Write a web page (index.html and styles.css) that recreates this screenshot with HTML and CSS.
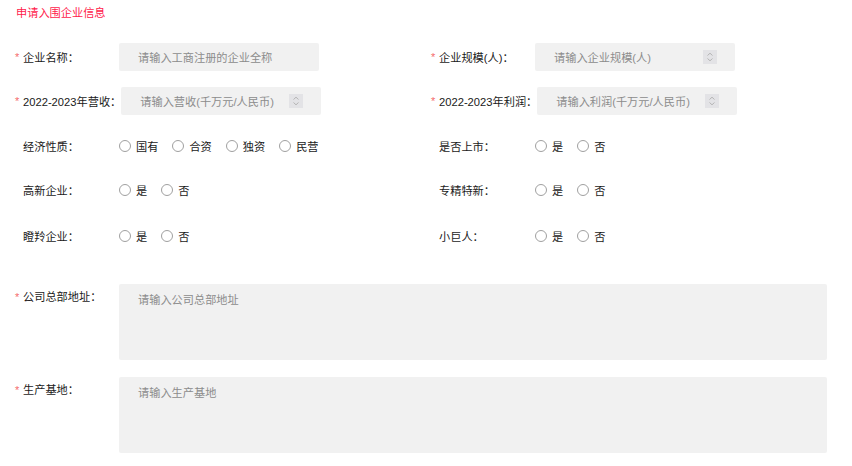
FILE: index.html
```html
<!DOCTYPE html>
<html lang="zh-CN">
<head>
    <meta charset="UTF-8">
    <title>申请入围企业信息</title>
    <link rel="stylesheet" href="styles.css">
</head>
<body>
    <div class="apply-form">
        <div class="form-title">申请入围企业信息</div>

        <div class="form-grid">
            <div class="form-item row-input">
                <span class="req">*</span><label class="item-label">企业名称：</label>
                <div class="input-box"><span class="ph">请输入工商注册的企业全称</span></div>
            </div>
            <div class="form-item row-input">
                <span class="req">*</span><label class="item-label">企业规模(人)：</label>
                <div class="input-box"><span class="ph">请输入企业规模(人)</span><span class="spin"><svg width="8" height="10" viewBox="0 0 8 10"><path d="M1.5 3.5 L4 1.2 L6.5 3.5 M1.5 6.5 L4 8.8 L6.5 6.5" fill="none" stroke="#b5b5b5" stroke-width="1"/></svg></span></div>
            </div>

            <div class="form-item row-input">
                <span class="req">*</span><label class="item-label">2022-2023年营收：</label>
                <div class="input-box"><span class="ph">请输入营收(千万元/人民币)</span><span class="spin"><svg width="8" height="10" viewBox="0 0 8 10"><path d="M1.5 3.5 L4 1.2 L6.5 3.5 M1.5 6.5 L4 8.8 L6.5 6.5" fill="none" stroke="#b5b5b5" stroke-width="1"/></svg></span></div>
            </div>
            <div class="form-item row-input">
                <span class="req">*</span><label class="item-label">2022-2023年利润：</label>
                <div class="input-box"><span class="ph">请输入利润(千万元/人民币)</span><span class="spin"><svg width="8" height="10" viewBox="0 0 8 10"><path d="M1.5 3.5 L4 1.2 L6.5 3.5 M1.5 6.5 L4 8.8 L6.5 6.5" fill="none" stroke="#b5b5b5" stroke-width="1"/></svg></span></div>
            </div>

            <div class="form-item row-radio">
                <span class="req blank"></span><label class="item-label">经济性质：</label>
                <div class="radio-group">
                    <span class="radio"><i></i>国有</span>
                    <span class="radio"><i></i>合资</span>
                    <span class="radio"><i></i>独资</span>
                    <span class="radio"><i></i>民营</span>
                </div>
            </div>
            <div class="form-item row-radio">
                <span class="req blank"></span><label class="item-label">是否上市：</label>
                <div class="radio-group">
                    <span class="radio"><i></i>是</span>
                    <span class="radio"><i></i>否</span>
                </div>
            </div>

            <div class="form-item row-radio">
                <span class="req blank"></span><label class="item-label">高新企业：</label>
                <div class="radio-group">
                    <span class="radio"><i></i>是</span>
                    <span class="radio"><i></i>否</span>
                </div>
            </div>
            <div class="form-item row-radio">
                <span class="req blank"></span><label class="item-label">专精特新：</label>
                <div class="radio-group">
                    <span class="radio"><i></i>是</span>
                    <span class="radio"><i></i>否</span>
                </div>
            </div>

            <div class="form-item row-radio">
                <span class="req blank"></span><label class="item-label">瞪羚企业：</label>
                <div class="radio-group">
                    <span class="radio"><i></i>是</span>
                    <span class="radio"><i></i>否</span>
                </div>
            </div>
            <div class="form-item row-radio">
                <span class="req blank"></span><label class="item-label">小巨人：</label>
                <div class="radio-group">
                    <span class="radio"><i></i>是</span>
                    <span class="radio"><i></i>否</span>
                </div>
            </div>
        </div>

        <div class="form-item row-area first-area">
            <span class="req">*</span><label class="item-label">公司总部地址：</label>
            <div class="area-box"><span class="ph">请输入公司总部地址</span></div>
        </div>
        <div class="form-item row-area">
            <span class="req">*</span><label class="item-label">生产基地：</label>
            <div class="area-box"><span class="ph">请输入生产基地</span></div>
        </div>
    </div>
</body>
</html>
```

FILE: styles.css
```css
body {
    margin: 0;
    background: #fff;
    font-family: "Liberation Sans", "Noto Sans CJK TC", "Noto Sans CJK SC", sans-serif;
    font-size: 11.2px;
    color: #1a1a1a;
}

.apply-form {
    padding: 5px 0 0 14px;
}

.form-title {
    color: #ff1a4b;
    font-size: 11.2px;
    line-height: 17px;
    padding-left: 2px;
    margin-bottom: 21px;
}

.form-grid {
    display: grid;
    grid-template-columns: 416px 1fr;
    row-gap: 16px;
}

.form-item {
    display: flex;
    align-items: center;
}

.req {
    width: 9px;
    flex-shrink: 0;
    color: #f56c6c;
    font-size: 11px;
    line-height: 11px;
    padding-left: 1px;
    box-sizing: border-box;
}

.item-label {
    min-width: 96px;
    white-space: nowrap;
    color: #1a1a1a;
}

/* text inputs */
.row-input {
    height: 28px;
}

.input-box {
    width: 200px;
    height: 28px;
    background: #f1f1f1;
    border-radius: 2px;
    display: flex;
    align-items: center;
    justify-content: space-between;
    padding: 0 18px 0 19px;
    box-sizing: border-box;
}

.ph {
    color: #8c8c8c;
}

.spin {
    width: 14px;
    height: 14px;
    background: #e3e3e6;
    display: flex;
    align-items: center;
    justify-content: center;
}

/* radio rows */
.row-radio {
    height: 28px;
}
.form-grid .row-radio:nth-child(5),
.form-grid .row-radio:nth-child(6) {
    margin-top: 1px;
}
.form-grid .row-radio:nth-child(9),
.form-grid .row-radio:nth-child(10) {
    margin-top: 2px;
}

.radio-group {
    display: flex;
    gap: 14px;
}

.radio {
    display: flex;
    align-items: center;
    gap: 5px;
}
.radio i {
    width: 12px;
    height: 12px;
    border: 1px solid #a0a0a0;
    border-radius: 50%;
    box-sizing: border-box;
    background: #fff;
}

/* textareas */
.row-area {
    align-items: flex-start;
    margin-top: 17px;
}
.first-area {
    margin-top: 34px;
}
.row-area .req,
.row-area .item-label {
    line-height: 17px;
    margin-top: 5px;
}

.area-box {
    width: 708px;
    height: 76px;
    background: #f1f1f1;
    border-radius: 2px;
    padding: 8px 19px;
    box-sizing: border-box;
    line-height: 17px;
}
```
